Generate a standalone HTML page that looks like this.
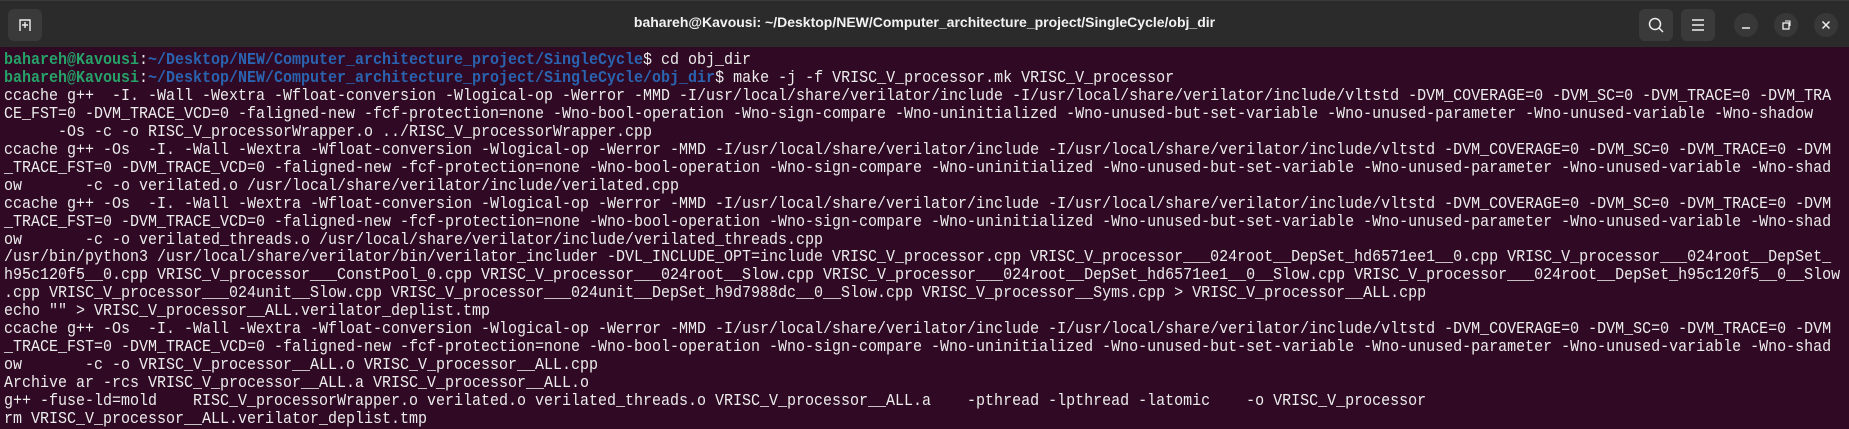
<!DOCTYPE html>
<html><head><meta charset="utf-8"><style>
html,body{margin:0;padding:0;width:1849px;height:429px;overflow:hidden;background:#300a24;}
#tb{position:absolute;left:0;top:0;width:1849px;height:47px;background:#2b2b2b;border-top:1px solid #3a3a3a;box-sizing:border-box;}
#title{position:absolute;left:0;width:1849px;top:13px;text-align:center;color:#f2f2f2;font:bold 14px "Liberation Sans",sans-serif;}
.btn{position:absolute;top:8px;width:34px;height:32px;background:#3a3a3a;border-radius:6px;}
.cir{position:absolute;top:12px;width:24px;height:24px;border-radius:50%;background:#383838;}
#term{position:absolute;left:4px;top:51px;font:16.5px/17.95px "Liberation Mono",monospace;color:#ececec;white-space:pre;transform:scaleX(0.909);transform-origin:0 0;}
.g{color:#26a269;font-weight:bold}.b{color:#2a63b0;font-weight:bold}
</style></head><body>
<div id="tb">
<div class="btn" style="left:8px"><svg width="34" height="32"><path d="M12 22V11h10v11M17 13v6M14 16h6" stroke="#eee" stroke-width="1.4" fill="none"/></svg></div>
<div id="title">bahareh@Kavousi: ~/Desktop/NEW/Computer_architecture_project/SingleCycle/obj_dir</div>
<div class="btn" style="left:1639px"><svg width="34" height="32"><circle cx="16" cy="15" r="5.5" stroke="#eee" stroke-width="1.5" fill="none"/><path d="M20 19l4 4" stroke="#eee" stroke-width="1.5"/></svg></div>
<div class="btn" style="left:1681px"><svg width="34" height="32"><path d="M11 11h12M11 16h12M11 21h12" stroke="#eee" stroke-width="1.4"/></svg></div>
<div class="cir" style="left:1734px"><svg width="24" height="24"><path d="M8 15h8" stroke="#eee" stroke-width="1.5"/></svg></div>
<div class="cir" style="left:1774px"><svg width="24" height="24"><rect x="9" y="10" width="6" height="6" stroke="#eee" stroke-width="1.3" fill="none"/><path d="M11 8h5v5" stroke="#eee" stroke-width="1.1" fill="none"/></svg></div>
<div class="cir" style="left:1814px"><svg width="24" height="24"><path d="M8.5 8.5l7 7M15.5 8.5l-7 7" stroke="#eee" stroke-width="1.5"/></svg></div>
</div>
<div id="term"><span class="g">bahareh@Kavousi</span>:<span class="b">~/Desktop/NEW/Computer_architecture_project/SingleCycle</span>$ cd obj_dir
<span class="g">bahareh@Kavousi</span>:<span class="b">~/Desktop/NEW/Computer_architecture_project/SingleCycle/obj_dir</span>$ make -j -f VRISC_V_processor.mk VRISC_V_processor
ccache g++  -I. -Wall -Wextra -Wfloat-conversion -Wlogical-op -Werror -MMD -I/usr/local/share/verilator/include -I/usr/local/share/verilator/include/vltstd -DVM_COVERAGE=0 -DVM_SC=0 -DVM_TRACE=0 -DVM_TRA
CE_FST=0 -DVM_TRACE_VCD=0 -faligned-new -fcf-protection=none -Wno-bool-operation -Wno-sign-compare -Wno-uninitialized -Wno-unused-but-set-variable -Wno-unused-parameter -Wno-unused-variable -Wno-shadow
      -Os -c -o RISC_V_processorWrapper.o ../RISC_V_processorWrapper.cpp
ccache g++ -Os  -I. -Wall -Wextra -Wfloat-conversion -Wlogical-op -Werror -MMD -I/usr/local/share/verilator/include -I/usr/local/share/verilator/include/vltstd -DVM_COVERAGE=0 -DVM_SC=0 -DVM_TRACE=0 -DVM
_TRACE_FST=0 -DVM_TRACE_VCD=0 -faligned-new -fcf-protection=none -Wno-bool-operation -Wno-sign-compare -Wno-uninitialized -Wno-unused-but-set-variable -Wno-unused-parameter -Wno-unused-variable -Wno-shad
ow       -c -o verilated.o /usr/local/share/verilator/include/verilated.cpp
ccache g++ -Os  -I. -Wall -Wextra -Wfloat-conversion -Wlogical-op -Werror -MMD -I/usr/local/share/verilator/include -I/usr/local/share/verilator/include/vltstd -DVM_COVERAGE=0 -DVM_SC=0 -DVM_TRACE=0 -DVM
_TRACE_FST=0 -DVM_TRACE_VCD=0 -faligned-new -fcf-protection=none -Wno-bool-operation -Wno-sign-compare -Wno-uninitialized -Wno-unused-but-set-variable -Wno-unused-parameter -Wno-unused-variable -Wno-shad
ow       -c -o verilated_threads.o /usr/local/share/verilator/include/verilated_threads.cpp
/usr/bin/python3 /usr/local/share/verilator/bin/verilator_includer -DVL_INCLUDE_OPT=include VRISC_V_processor.cpp VRISC_V_processor___024root__DepSet_hd6571ee1__0.cpp VRISC_V_processor___024root__DepSet_
h95c120f5__0.cpp VRISC_V_processor___ConstPool_0.cpp VRISC_V_processor___024root__Slow.cpp VRISC_V_processor___024root__DepSet_hd6571ee1__0__Slow.cpp VRISC_V_processor___024root__DepSet_h95c120f5__0__Slow
.cpp VRISC_V_processor___024unit__Slow.cpp VRISC_V_processor___024unit__DepSet_h9d7988dc__0__Slow.cpp VRISC_V_processor__Syms.cpp > VRISC_V_processor__ALL.cpp
echo "" > VRISC_V_processor__ALL.verilator_deplist.tmp
ccache g++ -Os  -I. -Wall -Wextra -Wfloat-conversion -Wlogical-op -Werror -MMD -I/usr/local/share/verilator/include -I/usr/local/share/verilator/include/vltstd -DVM_COVERAGE=0 -DVM_SC=0 -DVM_TRACE=0 -DVM
_TRACE_FST=0 -DVM_TRACE_VCD=0 -faligned-new -fcf-protection=none -Wno-bool-operation -Wno-sign-compare -Wno-uninitialized -Wno-unused-but-set-variable -Wno-unused-parameter -Wno-unused-variable -Wno-shad
ow       -c -o VRISC_V_processor__ALL.o VRISC_V_processor__ALL.cpp
Archive ar -rcs VRISC_V_processor__ALL.a VRISC_V_processor__ALL.o
g++ -fuse-ld=mold    RISC_V_processorWrapper.o verilated.o verilated_threads.o VRISC_V_processor__ALL.a    -pthread -lpthread -latomic    -o VRISC_V_processor
rm VRISC_V_processor__ALL.verilator_deplist.tmp</div>
</body></html>
